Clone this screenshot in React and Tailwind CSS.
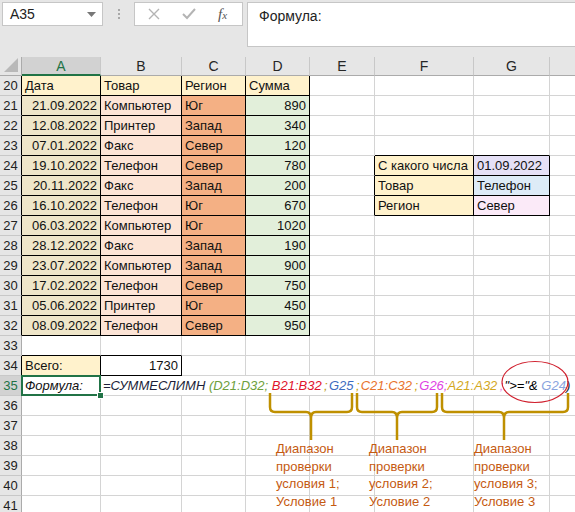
import clsx from 'clsx';

// Columns of the visible sheet, widths in px as written-out classes
const COLS = [
  { key: 'A', w: 'w-[79px]' },
  { key: 'B', w: 'w-[81px]' },
  { key: 'C', w: 'w-[64px]' },
  { key: 'D', w: 'w-[64px]' },
  { key: 'E', w: 'w-[65px]' },
  { key: 'F', w: 'w-[99px]' },
  { key: 'G', w: 'w-[76px]' },
  { key: 'H', w: 'w-[76px]' },
];

const DATA = [
  ['21.09.2022', 'Компьютер', 'Юг', 890],
  ['12.08.2022', 'Принтер', 'Запад', 340],
  ['07.01.2022', 'Факс', 'Север', 120],
  ['19.10.2022', 'Телефон', 'Север', 780],
  ['20.11.2022', 'Факс', 'Запад', 200],
  ['16.10.2022', 'Телефон', 'Юг', 670],
  ['06.03.2022', 'Компьютер', 'Юг', 1020],
  ['28.12.2022', 'Факс', 'Запад', 190],
  ['23.07.2022', 'Компьютер', 'Запад', 900],
  ['17.02.2022', 'Телефон', 'Север', 750],
  ['05.06.2022', 'Принтер', 'Юг', 450],
  ['08.09.2022', 'Телефон', 'Север', 950],
];

const CELLS = {
  20: {
    A: { t: 'Дата', bg: 'bg-[#fff2cc]' },
    B: { t: 'Товар', bg: 'bg-[#fff2cc]' },
    C: { t: 'Регион', bg: 'bg-[#fff2cc]' },
    D: { t: 'Сумма', bg: 'bg-[#fff2cc]' },
  },
  34: {
    A: { t: 'Всего:', bg: 'bg-[#fff2cc]' },
    B: { t: '1730', right: true },
  },
};

DATA.forEach(([date, item, region, sum], i) => {
  CELLS[21 + i] = {
    A: { t: date, bg: 'bg-[#efe6c9]', right: true },
    B: { t: item, bg: 'bg-[#fce4d6]' },
    C: { t: region, bg: 'bg-[#f4b084]' },
    D: { t: String(sum), bg: 'bg-[#e2efda]', right: true },
  };
});

CELLS[24].F = { t: 'С какого числа', bg: 'bg-[#fff2cc]' };
CELLS[24].G = { t: '01.09.2022', bg: 'bg-[#e5e0f6]' };
CELLS[25].F = { t: 'Товар', bg: 'bg-[#fff2cc]' };
CELLS[25].G = { t: 'Телефон', bg: 'bg-[#ddebf7]' };
CELLS[26].F = { t: 'Регион', bg: 'bg-[#fff2cc]' };
CELLS[26].G = { t: 'Север', bg: 'bg-[#fbeaf8]' };

const ROWS = Array.from({ length: 22 }, (_, i) => 20 + i);

// cells that carry a black outline
function boxed(r, c) {
  if (r >= 20 && r <= 32 && c >= 0 && c <= 3) return true;
  if (r === 34 && c >= 0 && c <= 1) return true;
  if (r >= 24 && r <= 26 && c >= 5 && c <= 6) return true;
  return false;
}

// sep: true -> spacing squeezed like the reference's " ; "
const FORMULA = [
  { t: '=СУММЕСЛИМН ', c: 'text-[#1c1f3a]' },
  { t: '(D21:D32;', c: 'text-[#6e9f3c]' },
  { t: ' B21:B32', c: 'text-[#e0142c]' },
  { t: ' ; ', c: 'text-[#b89a10]', sep: true },
  { t: 'G25', c: 'text-[#3d6cc0]' },
  { t: ' ; ', c: 'text-[#c9a200]', sep: true },
  { t: 'C21:C32', c: 'text-[#e8732c]' },
  { t: ' ; ', c: 'text-[#c9a200]', sep: true },
  { t: 'G26;', c: 'text-[#e03fe3]' },
  { t: 'A21:A32', c: 'text-[#d3a81e]' },
  { t: ' ; ', c: 'text-[#ea7ce6]', sep: true },
  { t: '">="&', c: 'text-black' },
  { t: ' G24', c: 'text-[#8aa4de]' },
  { t: ')', c: 'text-[#1c1f3a]' },
];

const BRACES = [
  { x1: 270, x2: 352, cx: 311 },
  { x1: 357, x2: 437, cx: 397 },
  { x1: 442, x2: 568, cx: 504 },
];

const LABELS = [
  { left: 'left-[276px]', n: 1 },
  { left: 'left-[369px]', n: 2 },
  { left: 'left-[474px]', n: 3 },
];

function bracePath({ x1, x2, cx }) {
  return `M${x1} 393 V407 Q${x1} 412 ${x1 + 5} 412 H${cx - 5} Q${cx} 412 ${cx} 418 V440 M${cx} 418 Q${cx} 412 ${cx + 5} 412 H${x2 - 5} Q${x2} 412 ${x2} 407 V393`;
}

function Cell({ r, ci }) {
  const col = COLS[ci];
  const cell = CELLS[r]?.[col.key];
  return (
    <div
      className={clsx(
        'h-full shrink-0 border-r border-b flex items-center px-[3px] overflow-hidden whitespace-nowrap',
        col.w,
        boxed(r, ci) || boxed(r, ci + 1) ? 'border-r-black' : 'border-r-[#d4d4d4]',
        boxed(r, ci) || boxed(r + 1, ci) ? 'border-b-black' : 'border-b-[#d4d4d4]',
        cell?.bg ?? 'bg-white',
        cell?.right && 'justify-end'
      )}
    >
      {cell?.t}
    </div>
  );
}

function RowHeader({ r }) {
  const selected = r === 35;
  return (
    <div
      className={clsx(
        'w-[22px] h-full shrink-0 border-r border-b border-b-[#c8c8c8] flex items-center justify-center',
        selected ? 'bg-[#d2d2d2] text-[#217346] border-r-[#217346]' : 'bg-[#e6e6e6] text-[#222]',
        !selected && (boxed(r, 0) ? 'border-r-black' : 'border-r-[#ababab]')
      )}
    >
      {r}
    </div>
  );
}

function FormulaRow() {
  return (
    <div className="flex h-[20px]">
      <RowHeader r={35} />
      {/* A35 — active cell */}
      <div className="relative w-[79px] h-full shrink-0 border-r border-b border-[#d4d4d4] bg-white flex items-center px-[3px] italic">
        Формула:
        <div className="absolute -left-px -top-px -right-px -bottom-px border-2 border-[#217346] z-10" />
        <div className="absolute -right-[4px] -bottom-[4px] w-[7px] h-[7px] bg-[#217346] border border-white z-20" />
      </div>
      {/* B35 overflowing across B..H */}
      <div className="w-[525px] h-full shrink-0 border-b border-[#d4d4d4] bg-white flex items-center pl-[2px] italic whitespace-nowrap">
        {FORMULA.map((s, i) => (
          <span key={i} className={clsx('whitespace-pre', s.c, s.sep && 'tracking-[-1.2px]')}>
            {s.t}
          </span>
        ))}
      </div>
    </div>
  );
}

export default function App() {
  return (
    <div className="relative w-[575px] h-[512px] overflow-hidden bg-[#e6e6e6] font-['Liberation_Sans',Arial,sans-serif] text-[13px] leading-none text-[#111]">
      {/* Name box + formula bar */}
      <div className="h-[57px] flex items-start pt-[2px]">
        <div className="ml-[2px] w-[101px] h-[24px] bg-white border border-[#c6c6c6] flex items-center justify-between pl-[7px] pr-[6px] shrink-0">
          <span className="text-[14px] text-[#222]">A35</span>
          <svg width="9" height="5" viewBox="0 0 9 5">
            <path d="M0 0 H9 L4.5 5 Z" fill="#777" />
          </svg>
        </div>
        <div className="w-[31px] h-[24px] flex flex-col items-center justify-center gap-[2px] shrink-0">
          <span className="w-[2px] h-[2px] bg-[#a8a8a8]" />
          <span className="w-[2px] h-[2px] bg-[#a8a8a8]" />
          <span className="w-[2px] h-[2px] bg-[#a8a8a8]" />
        </div>
        <div className="w-[109px] h-[24px] bg-white border border-[#c6c6c6] flex items-center shrink-0">
          <svg className="ml-[13px]" width="12" height="12" viewBox="0 0 12 12">
            <path d="M1 1 L11 11 M11 1 L1 11" stroke="#b4b4b4" strokeWidth="1.4" fill="none" />
          </svg>
          <svg className="ml-[22px]" width="14" height="12" viewBox="0 0 14 12">
            <path d="M1 6 L5 10 L13 1" stroke="#b4b4b4" strokeWidth="2" fill="none" />
          </svg>
          <span className="ml-[22px] font-['Liberation_Serif',serif] italic text-[15px] text-[#555]">
            f<span className="text-[11px]">x</span>
          </span>
        </div>
        <div className="ml-[4px] w-[340px] h-[45px] bg-white border border-[#c6c6c6] shrink-0 pl-[11px] pt-[6px] text-[14px] text-[#222]">
          Формула:
        </div>
      </div>

      {/* Column headers (H lies beyond the visible edge) */}
      <div className="flex h-[19px]">
        <div className="w-[22px] h-full shrink-0 bg-[#e6e6e6] border-r border-b border-[#ababab] flex items-end justify-end">
          <svg width="16" height="16" viewBox="0 0 16 16" className="mr-[2px] mb-[2px]">
            <path d="M15 1 V15 H1 Z" fill="#b9b9b9" />
          </svg>
        </div>
        {COLS.map((col) => (
          <div
            key={col.key}
            className={clsx(
              'h-full shrink-0 border-r border-r-[#c8c8c8] flex items-center justify-center text-[14px]',
              col.w,
              col.key === 'A'
                ? 'bg-[#d2d2d2] text-[#217346] border-b-2 border-b-[#217346]'
                : 'bg-[#e6e6e6] text-[#262626] border-b border-b-[#ababab]'
            )}
          >
            {col.key === 'H' ? '' : col.key}
          </div>
        ))}
      </div>

      {/* Sheet rows */}
      {ROWS.map((r) =>
        r === 35 ? (
          <FormulaRow key={r} />
        ) : (
          <div key={r} className="flex h-[20px]">
            <RowHeader r={r} />
            {COLS.map((col, ci) => (
              <Cell key={col.key} r={r} ci={ci} />
            ))}
          </div>
        )
      )}

      {/* Annotations drawn over the sheet */}
      <svg className="absolute left-0 top-0 pointer-events-none z-30" width="575" height="512" viewBox="0 0 575 512">
        <ellipse cx="535" cy="382" rx="33" ry="20.5" fill="none" stroke="#d0202e" strokeWidth="1.2" />
        {BRACES.map((b) => (
          <path key={b.cx} d={bracePath(b)} fill="none" stroke="#bf9000" strokeWidth="2.5" strokeLinejoin="round" />
        ))}
      </svg>
      {LABELS.map((l) => (
        <div
          key={l.n}
          className={clsx('absolute top-[440px] z-30 text-[13px] leading-[17.5px] text-[#c55a11]', l.left)}
        >
          <div>Диапазон</div>
          <div>проверки</div>
          <div>условия {l.n};</div>
          <div>Условие {l.n}</div>
        </div>
      ))}
    </div>
  );
}
